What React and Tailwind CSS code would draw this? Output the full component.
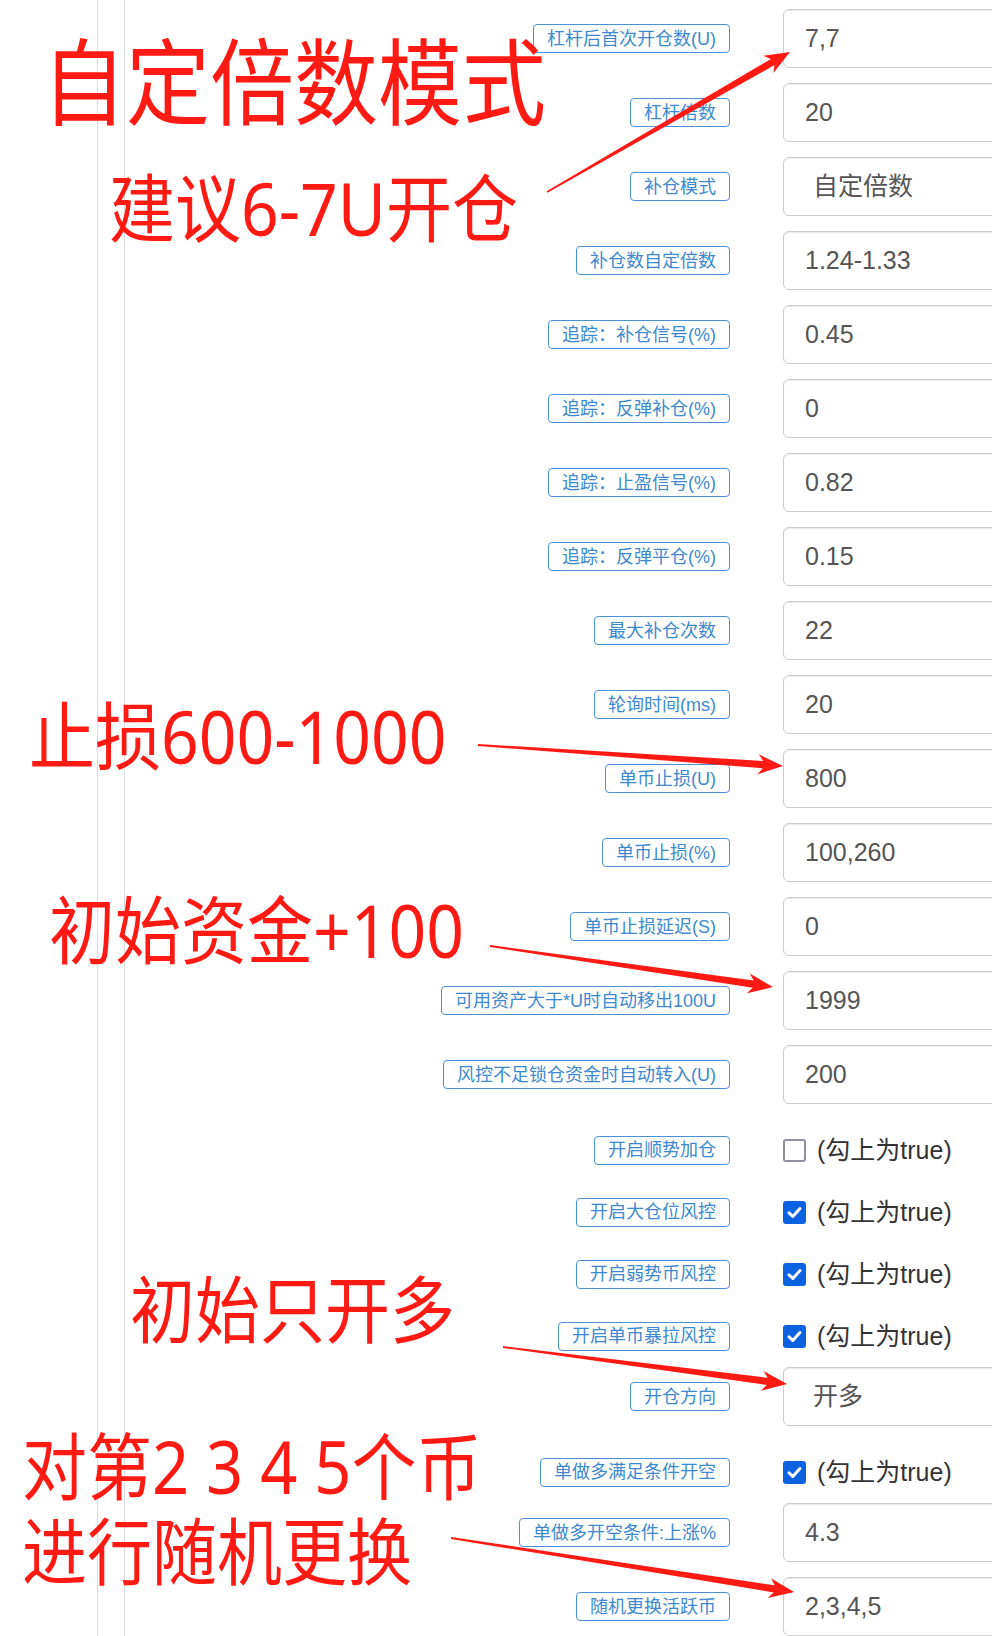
import React from "react";

const rows = [
  { label: "杠杆后首次开仓数(U)", value: "7,7" },
  { label: "杠杆倍数", value: "20" },
  { label: "补仓模式", value: "自定倍数", select: true },
  { label: "补仓数自定倍数", value: "1.24-1.33" },
  { label: "追踪：补仓信号(%)", value: "0.45" },
  { label: "追踪：反弹补仓(%)", value: "0" },
  { label: "追踪：止盈信号(%)", value: "0.82" },
  { label: "追踪：反弹平仓(%)", value: "0.15" },
  { label: "最大补仓次数", value: "22" },
  { label: "轮询时间(ms)", value: "20" },
  { label: "单币止损(U)", value: "800" },
  { label: "单币止损(%)", value: "100,260" },
  { label: "单币止损延迟(S)", value: "0" },
  { label: "可用资产大于*U时自动移出100U", value: "1999" },
  { label: "风控不足锁仓资金时自动转入(U)", value: "200" },
  { label: "开启顺势加仓", check: false },
  { label: "开启大仓位风控", check: true },
  { label: "开启弱势币风控", check: true },
  { label: "开启单币暴拉风控", check: true },
  { label: "开仓方向", value: "开多", select: true },
  { label: "单做多满足条件开空", check: true },
  { label: "单做多开空条件:上涨%", value: "4.3" },
  { label: "随机更换活跃币", value: "2,3,4,5" },
];

// annotation arrows: start point -> tip
const arrows = [
  [547, 192, 790, 52],
  [478, 745, 783, 766],
  [490, 946, 773, 987],
  [503, 1347, 787, 1384],
  [451, 1538, 794, 1592],
];

function Arrow({ x1, y1, x2, y2 }) {
  const dx = x2 - x1;
  const dy = y2 - y1;
  const len = Math.hypot(dx, dy);
  const ux = dx / len;
  const uy = dy / len;
  const nx = -uy;
  const ny = ux;
  const p = (t, w) => `${(x1 + ux * t + nx * w).toFixed(1)},${(y1 + uy * t + ny * w).toFixed(1)}`;
  const head = 25;
  const pts = [
    p(0, 0.9),
    p(len - head + 5, 3.6),
    p(len - head, 10),
    p(len, 0),
    p(len - head, -10),
    p(len - head + 5, -3.6),
    p(0, -0.9),
  ];
  return <polygon points={pts.join(" ")} fill="#ff1a14" />;
}

function Tag({ children }) {
  return (
    <span className="inline-flex h-[29px] items-center rounded-[4px] border border-[#4a92d6] px-[13px] text-[18px] leading-none text-[#3d89cf]">
      {children}
    </span>
  );
}

function CheckBox({ checked }) {
  if (!checked) {
    return <span className="block h-[23px] w-[23px] rounded-[3px] border-[2.5px] border-[#8f8f9d] bg-white" />;
  }
  return (
    <span className="flex h-[23px] w-[23px] items-center justify-center rounded-[3px] bg-[#0b63e2]">
      <svg width="17" height="17" viewBox="0 0 17 17" fill="none">
        <path d="M3 8.8 L6.8 12.4 L14 4.6" stroke="white" strokeWidth="3" strokeLinecap="round" strokeLinejoin="round" />
      </svg>
    </span>
  );
}

function Row({ row }) {
  if ("check" in row) {
    return (
      <div className="flex h-[62px] items-center">
        <div className="flex w-[605px] justify-end">
          <Tag>{row.label}</Tag>
        </div>
        <div className="ml-[53px] flex items-center gap-[11px]">
          <CheckBox checked={row.check} />
          <span className="text-[25px] leading-none text-[#333]">(勾上为true)</span>
        </div>
      </div>
    );
  }
  return (
    <div className="mb-[15px] flex h-[59px] items-center">
      <div className="flex w-[605px] justify-end">
        <Tag>{row.label}</Tag>
      </div>
      <div
        className={`ml-[53px] flex h-[59px] w-[320px] shrink-0 items-center rounded-[6px] border border-[#cccccc] bg-white text-[25px] text-[#555] shadow-[inset_0_1px_1px_rgba(0,0,0,0.075)] ${
          row.select ? "pl-[29px]" : "pl-[21px]"
        }`}
      >
        {row.value}
      </div>
    </div>
  );
}

// red hand-made annotations laid over the form
const notes = [
  { text: "自定倍数模式", cls: "left-[42px] top-[35px] text-[84px]" },
  { text: "建议6-7U开仓", cls: "left-[109px] top-[170px] text-[66px]" },
  { text: "止损600-1000", cls: "left-[29px] top-[698px] text-[66px]" },
  { text: "初始资金+100", cls: "left-[49px] top-[892px] text-[66px]" },
  { text: "初始只开多", cls: "left-[130px] top-[1273px] text-[65px]" },
  { text: "对第2 3 4 5个币", cls: "left-[22px] top-[1430px] text-[65px]" },
  { text: "进行随机更换", cls: "left-[22px] top-[1515px] text-[65px]" },
];

export default function App() {
  return (
    <div className="relative h-[1636px] w-[992px] overflow-hidden bg-white font-['Liberation_Sans','Noto_Sans_CJK_SC',sans-serif]">
      <div className="flex h-full">
        <div className="w-[97px] shrink-0" />
        <div className="w-[27px] shrink-0 border-l border-[#dcdcdc]" />
        <div className="flex-1 border-l border-[#dcdcdc] pt-[9px]">
          {rows.map((row) => (
            <Row key={row.label} row={row} />
          ))}
        </div>
      </div>

      {notes.map((n) => (
        <span
          key={n.text}
          className={`absolute origin-top scale-y-[1.12] whitespace-pre font-['Noto_Sans','Noto_Sans_CJK_SC',sans-serif] leading-none text-[#ff1a14] ${n.cls}`}
        >
          {n.text}
        </span>
      ))}

      <svg className="pointer-events-none absolute left-0 top-0" width="992" height="1636" viewBox="0 0 992 1636">
        {arrows.map(([x1, y1, x2, y2], i) => (
          <Arrow key={i} x1={x1} y1={y1} x2={x2} y2={y2} />
        ))}
      </svg>
    </div>
  );
}
